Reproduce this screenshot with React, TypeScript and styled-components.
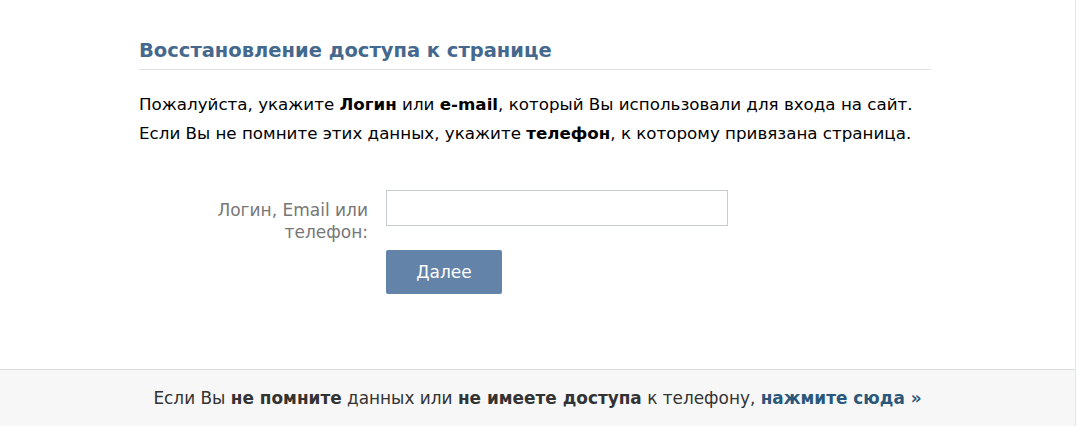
import React from "react";
import styled, { createGlobalStyle } from "styled-components";

const GlobalStyle = createGlobalStyle`
  html, body {
    margin: 0;
    padding: 0;
    background: #ffffff;
  }
  body {
    font-family: "DejaVu Sans", Verdana, sans-serif;
    color: #000;
  }
`;

const Page = styled.div`
  width: 1075px;
  height: 426px;
  border-right: 1px solid #e4e6e9;
  display: flex;
  flex-direction: column;
`;

const Content = styled.main`
  flex: 1;
  width: 792px;
  margin-left: 139px;
  padding-top: 39px;
  box-sizing: border-box;
`;

const Title = styled.h2`
  margin: 0;
  padding: 0 0 6px;
  font-size: 19.5px;
  line-height: 24px;
  font-weight: bold;
  color: #45688e;
  border-bottom: 1px solid #dfe3e8;
`;

const Intro = styled.p`
  margin: 20px 0 0;
  font-size: 16.7px;
  line-height: 29px;
`;

const Form = styled.form`
  margin-top: 42px;
  display: grid;
  grid-template-columns: 229px 342px;
  column-gap: 18px;
  row-gap: 7px;
`;

const Label = styled.label`
  text-align: right;
  font-size: 17px;
  line-height: 22px;
  color: #777;
  padding-top: 9px;
`;

const Input = styled.input`
  box-sizing: border-box;
  width: 342px;
  height: 36px;
  border: 1px solid #c5ccd4;
  padding: 0 6px;
  font: inherit;
  font-size: 17px;
  outline: none;
`;

const Button = styled.button`
  grid-column: 2;
  width: 116px;
  height: 44px;
  border: none;
  border-radius: 2px;
  background: #6383a8;
  color: #fff;
  font-family: inherit;
  font-size: 17px;
`;

const Footer = styled.footer`
  height: 56px;
  border-top: 1px solid #dadcdf;
  background: #f7f7f7;
  display: flex;
  align-items: center;
  justify-content: center;
  font-size: 16.9px;
  color: #333;
`;

const Strong = styled.b<{ $tone?: string }>`
  color: ${(p) => p.$tone ?? "inherit"};
`;

const Link = styled.a`
  color: #2b587a;
  font-weight: bold;
  text-decoration: none;
`;

export default function App() {
  return (
    <>
      <GlobalStyle />
      <Page>
        <Content>
          <Title>Восстановление доступа к странице</Title>
          <Intro>
            Пожалуйста, укажите <Strong>Логин</Strong> или <Strong>e-mail</Strong>, который Вы
            использовали для входа на сайт.
            <br />
            Если Вы не помните этих данных, укажите <Strong>телефон</Strong>, к которому
            привязана страница.
          </Intro>
          <Form onSubmit={(e) => e.preventDefault()}>
            <Label htmlFor="login">
              Логин, Email или
              <br />
              телефон:
            </Label>
            <Input id="login" autoFocus />
            <Button type="submit">Далее</Button>
          </Form>
        </Content>
        <Footer>
          <span>
            Если Вы <Strong>не помните</Strong> данных или <Strong>не имеете доступа</Strong> к
            телефону, <Link href="#">нажмите сюда »</Link>
          </span>
        </Footer>
      </Page>
    </>
  );
}
